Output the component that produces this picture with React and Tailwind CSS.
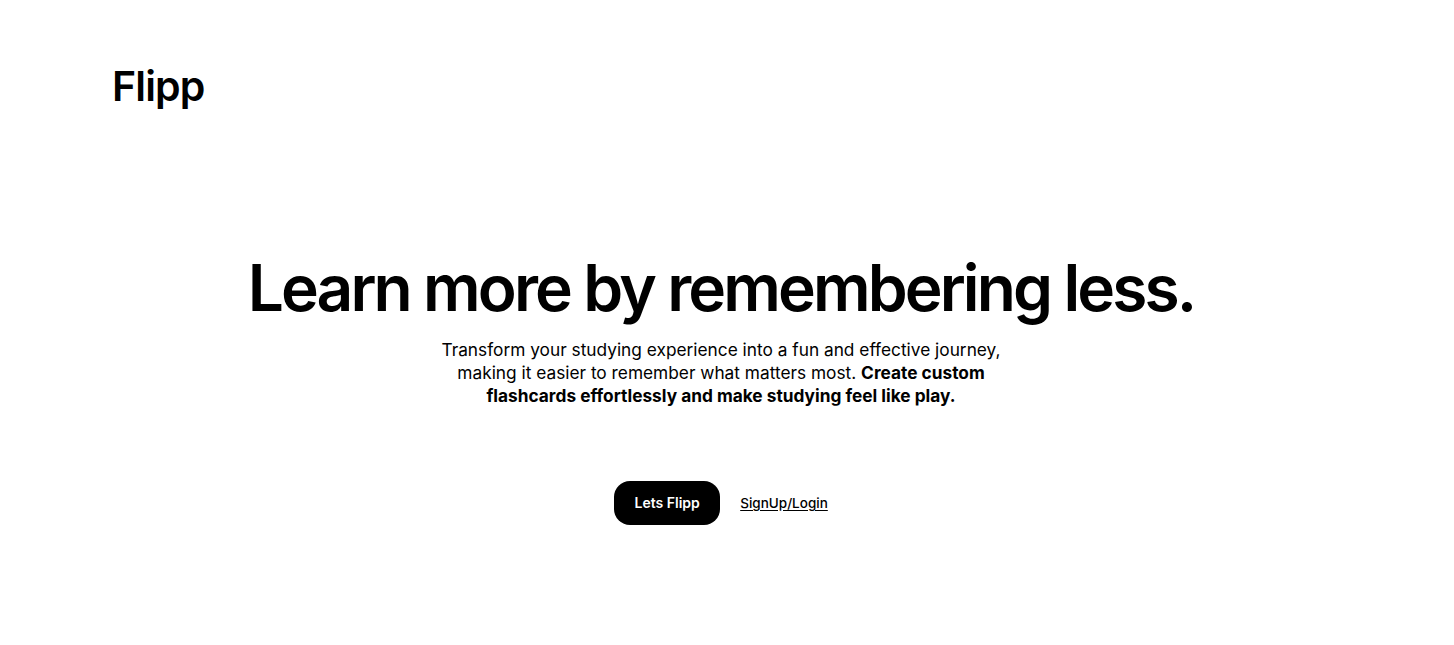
export default function App() {
  return (
    <div className="min-h-screen bg-white text-black font-['Inter','Liberation_Sans',sans-serif]">
      {/* Header */}
      <header className="px-[112px] pt-[62px]">
        <h1 className="text-[41px] leading-[48px] font-semibold tracking-[-0.02em]">Flipp</h1>
      </header>

      {/* Hero */}
      <main className="flex flex-col items-center text-center pt-[142px] pr-[12px]">
        <h2 className="text-[64px] leading-[72px] font-semibold tracking-[-0.045em]">
          Learn more by remembering less.
        </h2>
        <p className="mt-[14px] max-w-[580px] text-[17.3px] leading-[23px]">
          Transform your studying experience into a fun and effective journey, making it easier to
          remember what matters most.{" "}
          <span className="font-bold">Create custom flashcards effortlessly and make studying feel like play.</span>
        </p>
        <div className="mt-[74px] flex items-center gap-[20px]">
          <button className="h-[44px] w-[106px] rounded-2xl bg-black text-white text-sm font-semibold">
            Lets Flipp
          </button>
          <a href="#" className="text-[13.5px] font-medium underline underline-offset-2">
            SignUp/Login
          </a>
        </div>
      </main>
    </div>
  );
}
